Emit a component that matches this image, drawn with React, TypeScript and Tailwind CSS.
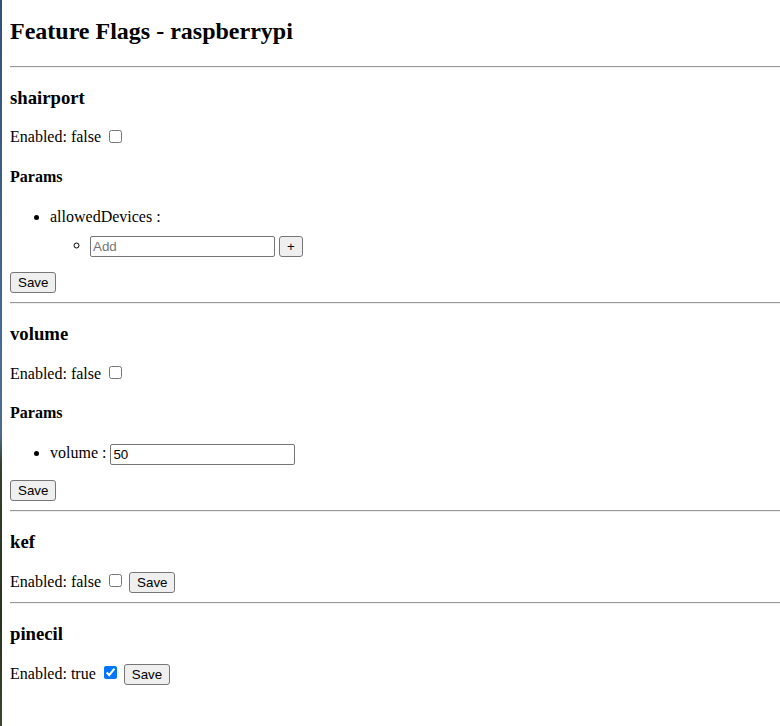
import React, { useState } from 'react';

interface Flag {
  name: string;
  enabled: boolean;
  params?: { key: string; kind: 'list' | 'number'; value: string | string[] }[];
}

const initialFlags: Flag[] = [
  { name: 'shairport', enabled: false, params: [{ key: 'allowedDevices', kind: 'list', value: [] }] },
  { name: 'volume', enabled: false, params: [{ key: 'volume', kind: 'number', value: '50' }] },
  { name: 'kef', enabled: false },
  { name: 'pinecil', enabled: true },
];

const btn =
  "h-[21px] px-[7px] bg-[#efefef] border border-[#767676] rounded-[3px] text-[13.333px] leading-[15px] text-black font-['Liberation_Sans',Arial,sans-serif]";
const textInput =
  "w-[185px] h-[21px] px-[2px] border border-[#767676] rounded-[2px] bg-white text-[13.333px] text-black font-['Liberation_Sans',Arial,sans-serif] placeholder:text-[#757575] align-middle outline-none";

const Divider = () => <hr className="mt-[8px] border-t border-t-[#9a9a9a] border-b border-b-[#eeeeee]" />;

const FlagSection: React.FC<{ flag: Flag }> = ({ flag }) => {
  const [enabled, setEnabled] = useState(flag.enabled);
  const [values, setValues] = useState<Record<string, string>>(() => {
    const v: Record<string, string> = {};
    flag.params?.forEach((p) => {
      v[p.key] = typeof p.value === 'string' ? p.value : '';
    });
    return v;
  });
  const hasParams = !!flag.params?.length;

  return (
    <section>
      <h3 className="mt-[18.72px] text-[18.72px] leading-[21.5px] font-bold">{flag.name}</h3>

      <div className={`mt-[18.72px] flex items-start ${hasParams ? 'h-[20px]' : 'h-[23px]'}`}>
        <span className="mt-[1.5px] leading-[18.4px]">Enabled: {enabled ? 'true' : 'false'}</span>
        <input
          type="checkbox"
          checked={enabled}
          onChange={(e) => setEnabled(e.target.checked)}
          className="ml-[8px] mr-[3px] mt-[3px] w-[13px] h-[13px]"
        />
        {!hasParams && (
          <button className={`${btn} ml-[4px] mt-[0.5px]`}>Save</button>
        )}
      </div>

      {hasParams && (
        <>
          <h4 className="mt-[21.28px] text-[16px] leading-[18.4px] font-bold">Params</h4>
          <ul className="mt-[21.28px] pl-[40px] list-disc leading-[18.4px]">
            {flag.params!.map((p) =>
              p.kind === 'list' ? (
                <li key={p.key}>
                  {p.key} :
                  <ul className="mt-[10px] pl-[40px] list-[circle]">
                    <li>
                      <input
                        type="text"
                        placeholder="Add"
                        value={values[p.key]}
                        onChange={(e) => setValues({ ...values, [p.key]: e.target.value })}
                        className={textInput}
                      />{' '}
                      <button className={`${btn} align-middle`}>+</button>
                    </li>
                  </ul>
                </li>
              ) : (
                <li key={p.key}>
                  {p.key} :{' '}
                  <input
                    type="text"
                    value={values[p.key]}
                    onChange={(e) => setValues({ ...values, [p.key]: e.target.value })}
                    className={textInput}
                  />
                </li>
              )
            )}
          </ul>
          <div className="mt-[13px] h-[24px]">
            <button className={btn}>Save</button>
          </div>
        </>
      )}
    </section>
  );
};

export default function App() {
  return (
    <div className="min-h-screen flex bg-white">
      <div className="w-[2px] shrink-0 bg-[linear-gradient(to_bottom,#33507a_0%,#4a6c96_50%,#4d6b8c_60%,#34402c_64%,#2a3220_85%,#3b4530_100%)]" />
      <main className="flex-1 pl-[8px] pt-[17px] text-[16px] text-black font-['Liberation_Serif','Times_New_Roman',serif]">
        <h2 className="text-[24px] leading-[28px] font-bold">Feature Flags - raspberrypi</h2>
        <hr className="mt-[21px] border-t border-t-[#9a9a9a] border-b border-b-[#eeeeee]" />
        {initialFlags.map((f, i) => (
          <React.Fragment key={f.name}>
            {i > 0 && <Divider />}
            <FlagSection flag={f} />
          </React.Fragment>
        ))}
      </main>
    </div>
  );
}
